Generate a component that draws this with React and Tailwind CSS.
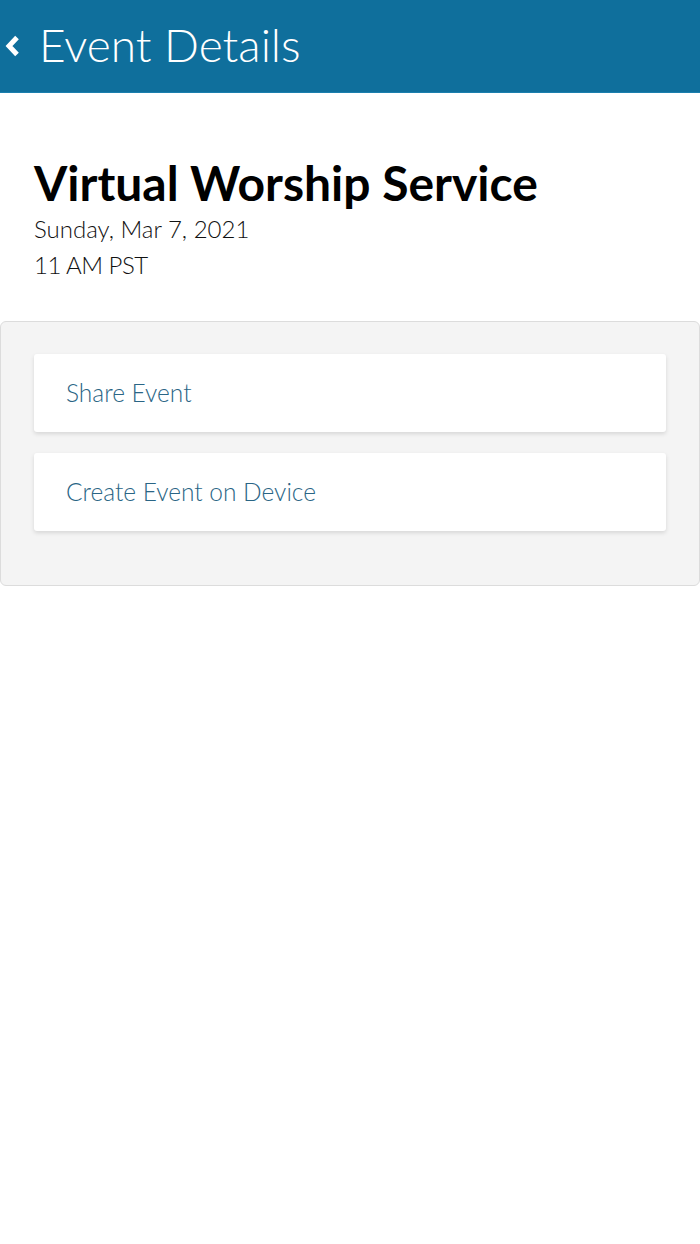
import React from "react";

const font = { fontFamily: "Lato, 'Noto Sans', sans-serif" };

function BackChevron() {
  return (
    <svg width="18" height="24" viewBox="0 0 18 24" className="shrink-0">
      <path d="M14 3.5 L6 12 L14 20.5" fill="none" stroke="white" strokeWidth="5" strokeLinejoin="miter" strokeLinecap="butt" />
    </svg>
  );
}

function ActionCard({ label }) {
  return (
    <button
      type="button"
      className="w-full h-[78px] bg-white rounded-[3px] shadow-[0_2px_4px_rgba(0,0,0,0.12)] text-left pl-8 text-[24.5px] font-light text-[#2a6585]"
    >
      {label}
    </button>
  );
}

export default function App() {
  return (
    <div className="min-h-[1244px] bg-white" style={font}>
      {/* Barra superior */}
      <header className="h-[93px] bg-[#0f6f9c] flex items-center gap-[18px] pl-[3px] border-b border-[#1b7fae]">
        <BackChevron />
        <h1 className="text-white text-[46px] font-light leading-none pb-[2px]">Event Details</h1>
      </header>

      {/* Datos del evento */}
      <section className="px-[34px] pt-[62px] pb-[38px]">
        <h2 className="text-[48px] font-bold text-black leading-[56px]">Virtual Worship Service</h2>
        <p className="text-[24px] font-light text-[#111] leading-[36px]">Sunday, Mar 7, 2021</p>
        <p className="text-[24px] font-light text-[#111] leading-[36px] tracking-[-0.5px]">11 AM PST</p>
      </section>

      {/* Acciones */}
      <section className="bg-[#f4f4f4] border border-[#dcdcdc] rounded-[6px] px-[33px] pt-[32px] pb-[54px] flex flex-col gap-[21px]">
        <ActionCard label="Share Event" />
        <ActionCard label="Create Event on Device" />
      </section>
    </div>
  );
}
